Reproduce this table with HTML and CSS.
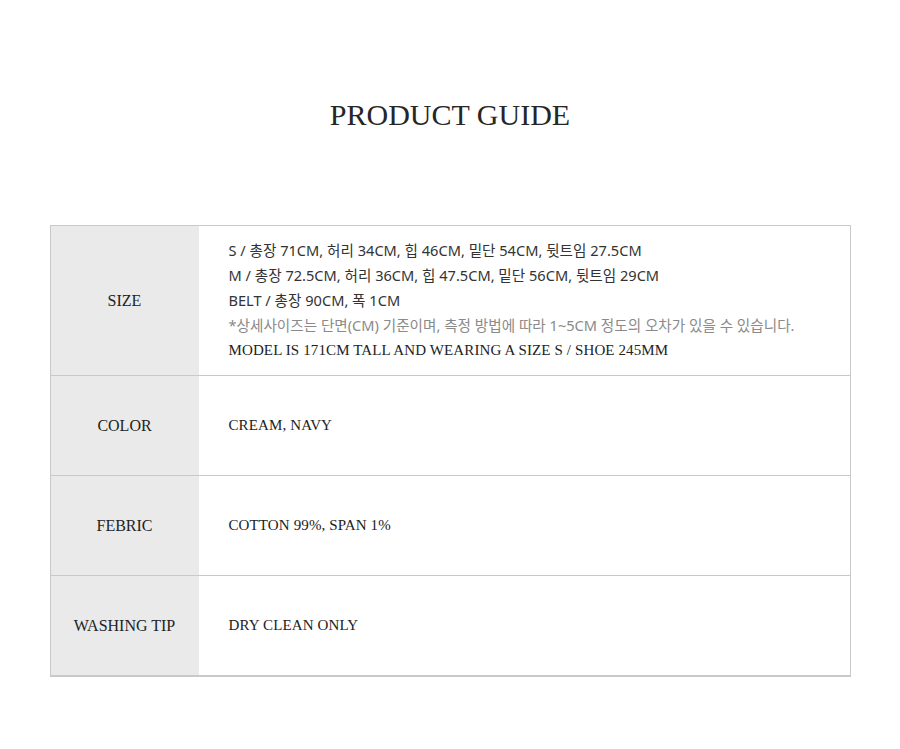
FILE: index.html
```html
<!DOCTYPE html>
<html lang="ko">
<head>
<meta charset="utf-8">
<title>Product Guide</title>
<link rel="stylesheet" href="styles.css">
</head>
<body>
<main class="page">
  <h1 class="title">PRODUCT GUIDE</h1>
  <div class="guide">
    <div class="row row-size">
      <div class="label">SIZE</div>
      <div class="value">
        <p class="ko">S / 총장 71CM, 허리 34CM, 힙 46CM, 밑단 54CM, 뒷트임 27.5CM</p>
        <p class="ko">M / 총장 72.5CM, 허리 36CM, 힙 47.5CM, 밑단 56CM, 뒷트임 29CM</p>
        <p class="ko">BELT / 총장 90CM, 폭 1CM</p>
        <p class="ko note">*상세사이즈는 단면(CM) 기준이며, 측정 방법에 따라 1~5CM 정도의 오차가 있을 수 있습니다.</p>
        <p class="en">MODEL IS 171CM TALL AND WEARING A SIZE S / SHOE 245MM</p>
      </div>
    </div>
    <div class="row">
      <div class="label">COLOR</div>
      <div class="value"><p class="en">CREAM, NAVY</p></div>
    </div>
    <div class="row">
      <div class="label">FEBRIC</div>
      <div class="value"><p class="en">COTTON 99%, SPAN 1%</p></div>
    </div>
    <div class="row">
      <div class="label">WASHING TIP</div>
      <div class="value"><p class="en">DRY CLEAN ONLY</p></div>
    </div>
  </div>
</main>
</body>
</html>
```
FILE: styles.css
```css
html, body {
  margin: 0;
  padding: 0;
  background: #ffffff;
}
.page {
  width: 801px;
  margin: 0 auto;
  padding-top: 96px;
  font-family: "Liberation Serif", "Times New Roman", serif;
  color: #222222;
}
.title {
  margin: 0;
  text-align: center;
  font-weight: normal;
  font-size: 30px;
  line-height: 38px;
  color: #262626;
}
.guide {
  margin-top: 91px;
  border: 1px solid #c9c9c9;
  border-bottom-width: 2px;
}
.row {
  display: grid;
  grid-template-columns: 148px 1fr;
  height: 99px;
  border-top: 1px solid #c9c9c9;
}
.row:first-child {
  border-top: none;
  height: 149px;
}
.label {
  background: #eaeaea;
  display: flex;
  align-items: center;
  justify-content: center;
  font-size: 16px;
  color: #222222;
}
.value {
  display: flex;
  flex-direction: column;
  justify-content: center;
  padding-left: 30px;
}
.value p {
  margin: 0;
  line-height: 25px;
}
.ko {
  font-family: "Noto Sans", "Noto Sans CJK KR", sans-serif;
  font-size: 14.6px;
  color: #333333;
}
.note {
  color: #8a8a8a;
}
.en {
  font-size: 15px;
  letter-spacing: 0.12px;
  color: #222222;
}
```
